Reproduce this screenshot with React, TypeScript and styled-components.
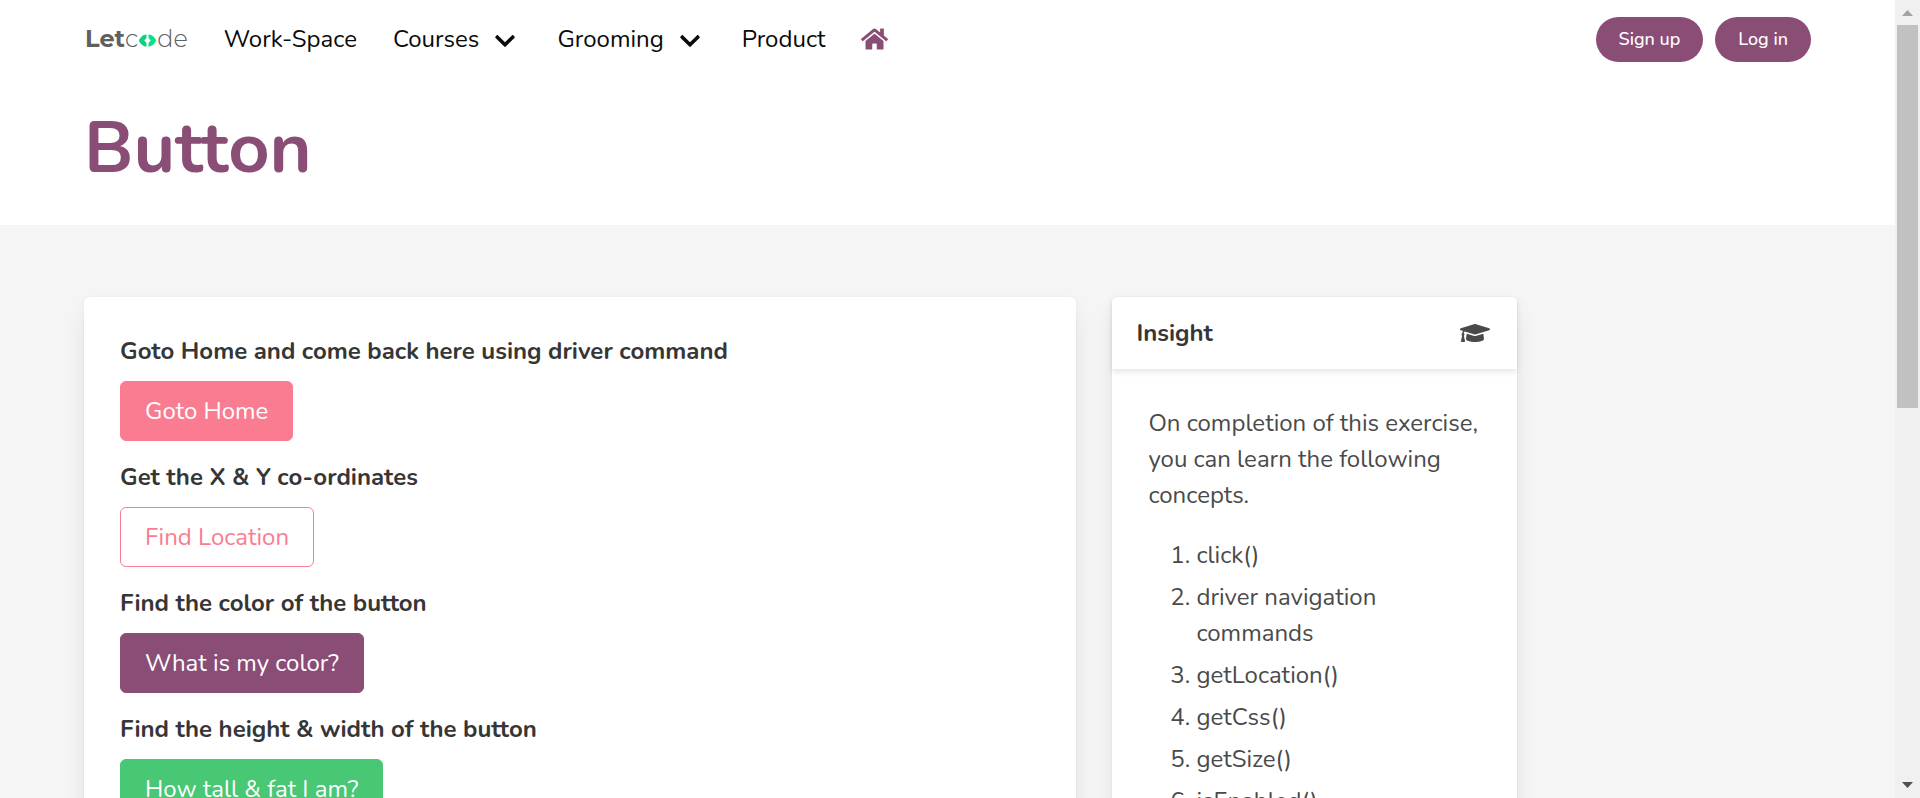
import React from "react";
import styled, { createGlobalStyle, css } from "styled-components";
import { FaChevronDown, FaGraduationCap, FaHome } from "react-icons/fa";

const purple = "#8a4d76";
const pink = "#fa7c91";
const green = "#48c774";

const GlobalStyle = createGlobalStyle`
  *, *::before, *::after { box-sizing: border-box; }
  html, body { margin: 0; padding: 0; }
  body {
    background: #ffffff;
    color: #4a4a4a;
    font-family: Nunito, Lato, sans-serif;
    font-size: 24px;
    line-height: 36px;
  }
  h1, h2, p, ol { margin: 0; padding: 0; }
  button { font-family: inherit; cursor: pointer; }
  a { text-decoration: none; }
`;

const Shell = styled.div`
  display: flex;
  height: 100vh;
  overflow: hidden;
`;

const Page = styled.div`
  display: flex;
  flex-direction: column;
  flex: 1;
  min-width: 0;
  overflow: hidden;
`;

const Container = styled.div`
  width: 100%;
  max-width: 1727px;
  margin: 0 auto;
`;

const Hero = styled.header`
  flex: none;
  background: #ffffff;
`;

const Navbar = styled.nav`
  display: flex;
  align-items: center;
  height: 78px;
`;

const Logo = styled.a`
  display: flex;
  align-items: center;
  padding: 0 18px 0 1px;
  color: #606060;
  font-family: Montserrat, Nunito, Lato, sans-serif;
  font-size: 24px;
  font-weight: 300;
`;

const LogoStrong = styled.span`
  font-weight: 700;
`;

const LogoMark = styled.svg`
  width: 17px;
  height: 13px;
  margin: 3px 1px 0;
`;

const navItem = css`
  display: flex;
  align-items: center;
  height: 78px;
  padding: 0 18px;
  border: 0;
  background: none;
  color: #0a0a0a;
  font-size: 24px;
  line-height: 36px;
`;

const NavLink = styled.a`
  ${navItem}
`;

const NavMenu = styled.button`
  ${navItem}
  gap: 16px;
  padding-right: 24px;
`;

const MenuArrow = styled(FaChevronDown)`
  width: 20px;
  height: 24px;
  margin-top: 4px;
`;

const HomeIcon = styled(FaHome)`
  width: 27px;
  height: 24px;
  color: ${purple};
`;

const Account = styled.div`
  display: flex;
  gap: 12px;
  margin-left: auto;
`;

const PillButton = styled.button`
  height: 45px;
  padding: 0 23px;
  border: 0;
  border-radius: 23px;
  background: ${purple};
  color: #ffffff;
  font-size: 18px;
  font-weight: 500;
  line-height: 27px;
`;

const Title = styled.h1`
  padding: 30px 0 36px;
  color: ${purple};
  font-size: 72px;
  font-weight: 700;
  line-height: 81px;
`;

const Section = styled.main`
  flex: 1 0 auto;
  padding: 72px 0;
  background: #f5f5f5;
`;

const Columns = styled(Container)`
  display: grid;
  grid-template-columns: repeat(12, minmax(0, 1fr));
  column-gap: 36px;
`;

const Card = styled.section<{ $span: number }>`
  grid-column: span ${(p) => p.$span};
  border-radius: 6px;
  background: #ffffff;
  box-shadow: 0 12px 24px -3px rgba(10, 10, 10, 0.1), 0 0 0 1px rgba(10, 10, 10, 0.02);
`;

const Tasks = styled.div`
  display: flex;
  flex-direction: column;
  gap: 18px;
  padding: 36px;
`;

const Task = styled.div`
  display: flex;
  flex-direction: column;
  align-items: flex-start;
  gap: 12px;
`;

const TaskLabel = styled.label`
  color: #363636;
  font-weight: 700;
`;

const TaskButton = styled.button<{ $fill: string; $ink: string; $edge: string }>`
  height: 60px;
  padding: 0 24px;
  border: 1px solid ${(p) => p.$edge};
  border-radius: 6px;
  background: ${(p) => p.$fill};
  color: ${(p) => p.$ink};
  font-size: 24px;
  line-height: 36px;
`;

const CardHeader = styled.div`
  display: flex;
  align-items: center;
  justify-content: space-between;
  padding: 18px 27px 18px 24px;
  box-shadow: 0 3px 6px rgba(10, 10, 10, 0.1);
`;

const CardTitle = styled.h2`
  color: #363636;
  font-size: 24px;
  font-weight: 700;
  line-height: 36px;
`;

const CapIcon = styled(FaGraduationCap)`
  width: 30px;
  height: 24px;
`;

const CardBody = styled.div`
  padding: 36px;
`;

const Concepts = styled.ol`
  display: flex;
  flex-direction: column;
  gap: 6px;
  margin: 24px 0 0 48px;
`;

const ScrollTrack = styled.div`
  display: flex;
  flex-direction: column;
  align-items: center;
  width: 25px;
  background: #f0f0f0;
`;

const ScrollThumb = styled.div`
  flex: 0 1 48%;
  width: 21px;
  margin-bottom: auto;
  background: #c1c1c1;
`;

const ScrollArrow = styled.svg<{ $tone: string }>`
  flex: none;
  width: 25px;
  height: 25px;
  fill: ${(p) => p.$tone};
`;

const tasks = [
  { id: "home", label: "Goto Home and come back here using driver command", text: "Goto Home", fill: pink, ink: "#ffffff", edge: pink },
  { id: "position", label: "Get the X & Y co-ordinates", text: "Find Location", fill: "#ffffff", ink: pink, edge: pink },
  { id: "color", label: "Find the color of the button", text: "What is my color?", fill: purple, ink: "#ffffff", edge: purple },
  { id: "size", label: "Find the height & width of the button", text: "How tall & fat I am?", fill: green, ink: "#ffffff", edge: green },
];

const concepts = ["click()", "driver navigation commands", "getLocation()", "getCss()", "getSize()", "isEnabled()"];

export default function App() {
  return (
    <>
      <GlobalStyle />
      <Shell>
        <Page>
          <Hero>
            <Container>
              <Navbar>
                <Logo href="#">
                  <LogoStrong>Let</LogoStrong>c
                  <LogoMark viewBox="0 0 17 13" role="img" aria-label="o">
                    <path d="M7.500 .5V4L5.300 6.500 7.500 9v3.500C5 13 1 9.500 .3 7.500Q0 6.500 .3 5.500C1 3.500 5 0 7.500 .5Z" fill="#0fd082" />
                    <path d="M9.500 .5V4l2.200 2.500L9.500 9v3.500c2.500 .5 6.500-3 7.200-5q.3-1 0-2C16 3.500 12 0 9.500 .5Z" fill="#05e08a" />
                  </LogoMark>
                  de
                </Logo>
                <NavLink href="#">Work-Space</NavLink>
                <NavMenu type="button">
                  Courses
                  <MenuArrow />
                </NavMenu>
                <NavMenu type="button">
                  Grooming
                  <MenuArrow />
                </NavMenu>
                <NavLink href="#">Product</NavLink>
                <NavLink href="#" aria-label="Home">
                  <HomeIcon />
                </NavLink>
                <Account>
                  <PillButton type="button">Sign up</PillButton>
                  <PillButton type="button">Log in</PillButton>
                </Account>
              </Navbar>
              <Title>Button</Title>
            </Container>
          </Hero>
          <Section>
            <Columns>
              <Card $span={7}>
                <Tasks>
                  {tasks.map((t) => (
                    <Task key={t.id}>
                      <TaskLabel htmlFor={t.id}>{t.label}</TaskLabel>
                      <TaskButton id={t.id} type="button" $fill={t.fill} $ink={t.ink} $edge={t.edge}>
                        {t.text}
                      </TaskButton>
                    </Task>
                  ))}
                </Tasks>
              </Card>
              <Card $span={3}>
                <CardHeader>
                  <CardTitle>Insight</CardTitle>
                  <CapIcon />
                </CardHeader>
                <CardBody>
                  <p>On completion of this exercise, you can learn the following concepts.</p>
                  <Concepts>
                    {concepts.map((c) => (
                      <li key={c}>{c}</li>
                    ))}
                  </Concepts>
                </CardBody>
              </Card>
            </Columns>
          </Section>
        </Page>
        <ScrollTrack aria-hidden="true">
          <ScrollArrow $tone="#a3a3a3" viewBox="0 0 25 25">
            <path d="M7 16 12.500 10 18 16Z" />
          </ScrollArrow>
          <ScrollThumb />
          <ScrollArrow $tone="#505050" viewBox="0 0 25 25">
            <path d="M7 9h11l-5.500 6Z" />
          </ScrollArrow>
        </ScrollTrack>
      </Shell>
    </>
  );
}
